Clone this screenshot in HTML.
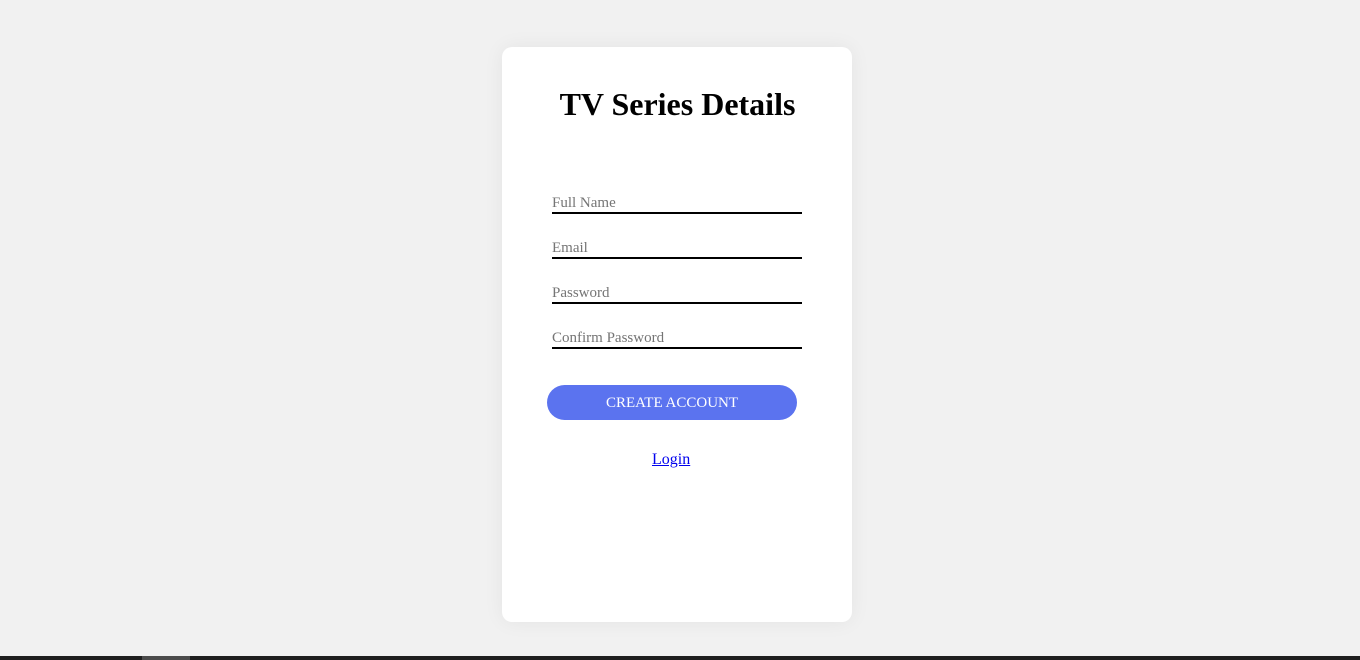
<!DOCTYPE html>
<html><head><style>
body{margin:0;width:1360px;height:660px;background:#f1f1f1;position:relative;overflow:hidden;font-family:"Liberation Serif",serif}
.card{position:absolute;left:502px;top:47px;width:350px;height:575px;background:#fff;border-radius:10px;box-shadow:0 0 20px rgba(0,0,0,0.06)}
h1{position:absolute;left:0;right:5px;top:86px;margin:0;text-align:center;font-size:32px;font-weight:bold;line-height:36px}
.f{position:absolute;left:552px;width:250px;border-bottom:2px solid #000;color:#757575;font-size:15px;line-height:18px;height:18px;padding-top:1px}
.btn{position:absolute;left:547px;top:385px;width:250px;height:35px;border-radius:18px;background:#5b73ef;color:#fff;font-size:15px;text-align:center;line-height:36px}
.lg{position:absolute;left:652px;top:450px;color:#0000ee;text-decoration:underline;font-size:16px;line-height:20px}
.bar{position:absolute;left:0;top:656px;width:1360px;height:4px;background:#1f1f1f}
.bar i{position:absolute;left:142px;width:48px;height:4px;background:#4b4b4b}
</style></head><body>
<div class="card"></div>
<h1>TV Series Details</h1>
<div class="f" style="top:193px">Full Name</div>
<div class="f" style="top:238px">Email</div>
<div class="f" style="top:283px">Password</div>
<div class="f" style="top:328px">Confirm Password</div>
<div class="btn">CREATE ACCOUNT</div>
<div class="lg">Login</div>
<div class="bar"><i></i></div>
</body></html>
